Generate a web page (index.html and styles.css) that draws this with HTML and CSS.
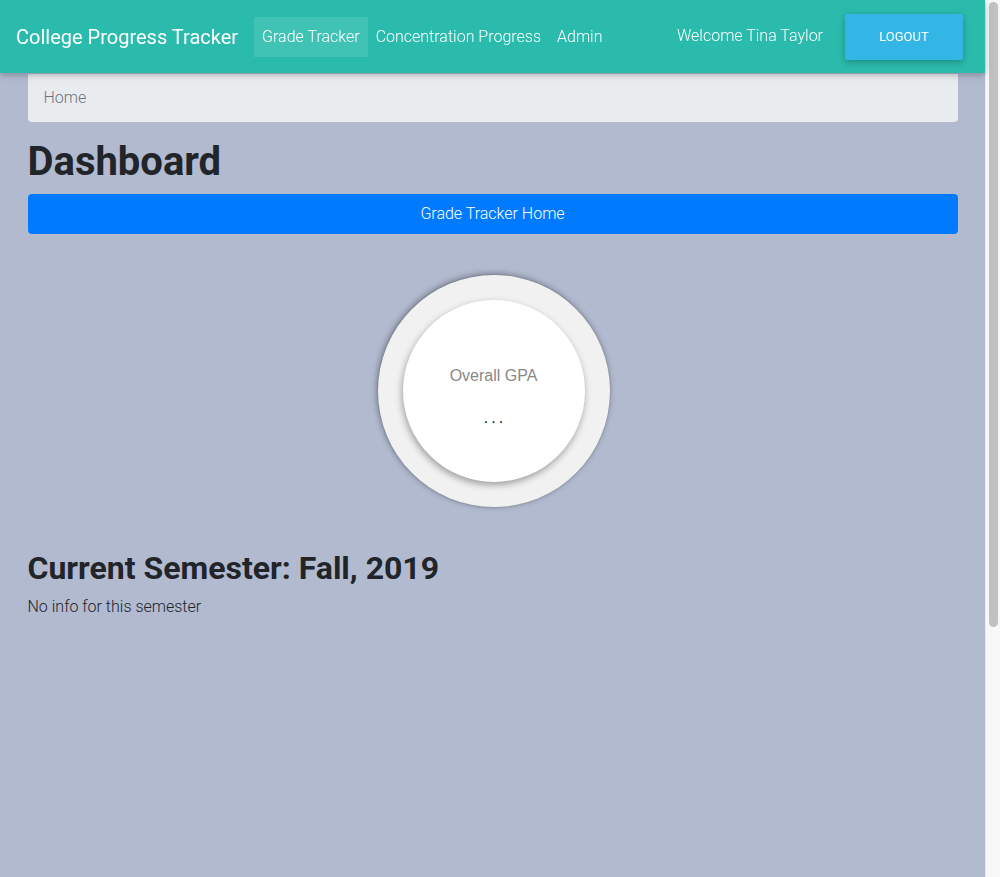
FILE: index.html
```html
<!DOCTYPE html>
<html lang="en">
<head>
<meta charset="utf-8">
<title>College Progress Tracker</title>
<link rel="stylesheet" href="styles.css">
</head>
<body>
<div class="page">
  <nav class="navbar">
    <a class="brand" href="#">College Progress Tracker</a>
    <ul class="nav-links">
      <li><a class="nav-link active" href="#">Grade Tracker</a></li>
      <li><a class="nav-link" href="#">Concentration Progress</a></li>
      <li><a class="nav-link" href="#">Admin</a></li>
    </ul>
    <div class="nav-right">
      <span class="welcome">Welcome Tina Taylor</span>
      <button class="btn-logout">Logout</button>
    </div>
  </nav>
  <main class="container">
    <ol class="breadcrumb"><li>Home</li></ol>
    <h1 class="title">Dashboard</h1>
    <a class="btn-primary" href="#">Grade Tracker Home</a>
    <div class="gpa-wrap">
      <div class="gpa-outer">
        <div class="gpa-inner">
          <div class="gpa-label">Overall GPA</div>
          <div class="gpa-value">...</div>
        </div>
      </div>
    </div>
    <h2 class="semester">Current Semester: Fall, 2019</h2>
    <p class="info">No info for this semester</p>
  </main>
</div>
<div class="scrollbar"><div class="thumb"></div></div>
</body>
</html>
```
FILE: styles.css
```css
* { box-sizing: border-box; }
html, body { margin: 0; padding: 0; }
body {
  background: #b1bacf;
  font-family: Roboto, "Liberation Sans", sans-serif;
  font-weight: 300;
  font-size: 16px;
  line-height: 1.5;
  color: #212529;
}
.page {
  width: 985px;
  min-height: 877px;
}
.scrollbar {
  position: fixed;
  top: 0;
  right: 0;
  width: 15px;
  height: 877px;
  background: #f8f8f8;
  border-left: 1px solid #ececec;
  padding: 2px 2px 0 3px;
}
.thumb {
  height: 625px;
  background: #c1c1c1;
  border-radius: 5px;
}
.navbar {
  height: 73px;
  background: #2bbbad;
  display: flex;
  align-items: center;
  padding: 0 22px 0 16px;
  box-shadow: 0 2px 5px 0 rgba(0,0,0,.16), 0 2px 10px 0 rgba(0,0,0,.12);
  position: relative;
  z-index: 2;
}
.brand {
  color: #fff;
  text-decoration: none;
  font-size: 20px;
  font-weight: 400;
  margin-right: 16px;
  white-space: nowrap;
}
.nav-links {
  list-style: none;
  display: flex;
  margin: 0;
  padding: 0;
}
.nav-link {
  display: block;
  color: #fff;
  text-decoration: none;
  padding: 8px 8px;
  line-height: 24px;
  font-size: 16px;
  font-weight: 300;
}
.nav-link.active { background: rgba(255,255,255,.1); }
.nav-right {
  margin-left: auto;
  display: flex;
  align-items: center;
}
.welcome {
  color: #fff;
  font-size: 16px;
  margin-right: 22px;
  margin-top: -2px;
}
.btn-logout {
  width: 118px;
  height: 46px;
  border: 0;
  border-radius: 2px;
  background: #33b5e5;
  color: #fff;
  font-family: Roboto, "Liberation Sans", sans-serif;
  font-size: 13px;
  font-weight: 400;
  text-transform: uppercase;
  box-shadow: 0 2px 5px 0 rgba(0,0,0,.16), 0 2px 10px 0 rgba(0,0,0,.12);
}
.container {
  width: 930px;
  margin: 0 auto;
}
.breadcrumb {
  list-style: none;
  margin: 1px 0 0;
  padding: 12px 16px;
  background: #e9ecef;
  border-radius: 0 0 4px 4px;
  color: #6c757d;
  height: 48px;
}
.title {
  font-size: 40px;
  font-weight: 700;
  line-height: 48px;
  margin: 16px 0 8px;
}
.btn-primary {
  display: block;
  text-align: center;
  background: #007bff;
  color: #fff;
  text-decoration: none;
  border-radius: 4px;
  padding: 8px 12px;
  line-height: 24px;
}
.gpa-wrap {
  display: flex;
  justify-content: center;
  padding: 41px 0 42px 2px;
}
.gpa-outer {
  width: 232px;
  height: 232px;
  border-radius: 50%;
  background: #f1f1f2;
  display: flex;
  align-items: center;
  justify-content: center;
  box-shadow: -1px -1px 6px rgba(0,0,0,.4), 0 0 2px rgba(0,0,0,.15);
}
.gpa-inner {
  width: 182px;
  height: 182px;
  border-radius: 50%;
  background: #fff;
  box-shadow: -1px 3px 7px rgba(0,0,0,.35);
  text-align: center;
  font-family: "Liberation Sans", Arial, sans-serif;
  font-weight: 400;
}
.gpa-label {
  padding-top: 66px;
  font-size: 16px;
  color: #888;
  line-height: 20px;
}
.gpa-value {
  margin-top: 22px;
  font-size: 16px;
  color: #111;
  line-height: 20px;
  letter-spacing: 3px;
  padding-left: 3px;
}
.semester {
  font-size: 32px;
  font-weight: 700;
  line-height: 38px;
  margin: 0 0 8px;
}
.info { margin: 0; }
```
